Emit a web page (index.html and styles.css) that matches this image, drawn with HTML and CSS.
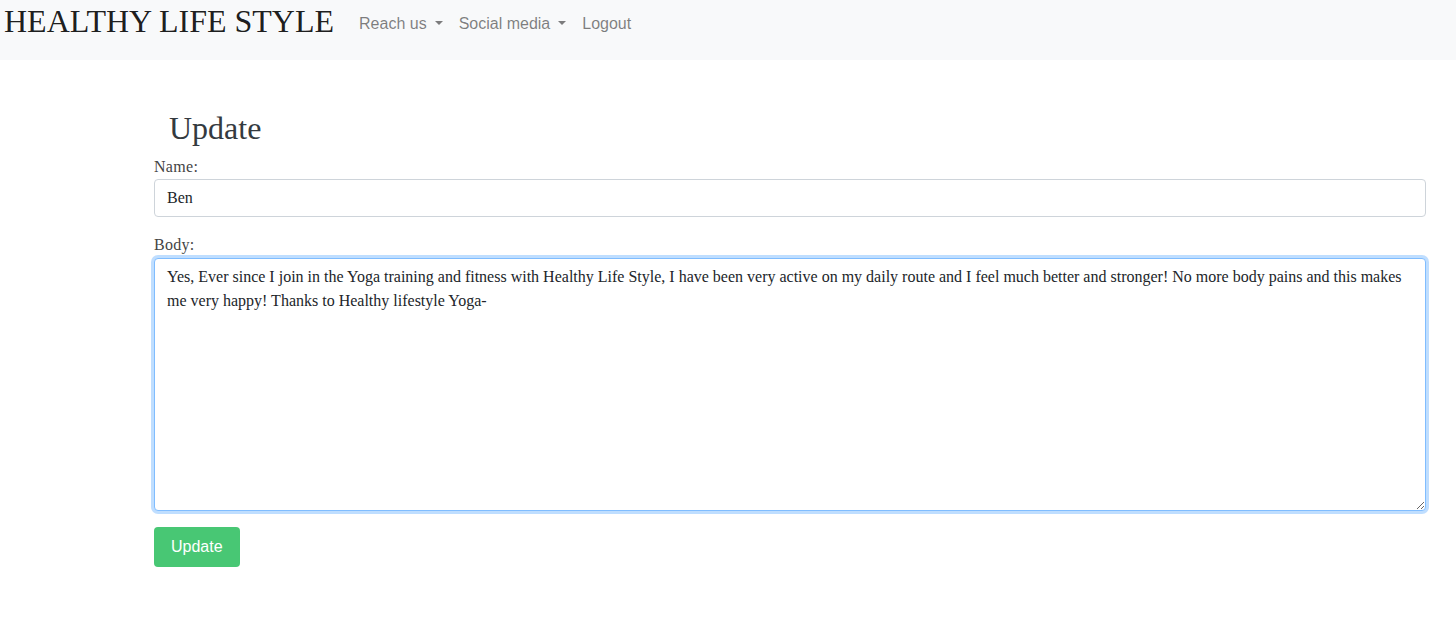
FILE: index.html
```html
<!DOCTYPE html>
<html lang="en">
<head>
<meta charset="utf-8">
<title>Update</title>
<link rel="stylesheet" href="styles.css">
</head>
<body>
<nav class="navbar">
  <a class="brand" href="#">HEALTHY LIFE STYLE</a>
  <ul class="nav">
    <li><a class="nav-link dropdown-toggle" href="#">Reach us</a></li>
    <li><a class="nav-link dropdown-toggle" href="#">Social media</a></li>
    <li><a class="nav-link" href="#">Logout</a></li>
  </ul>
</nav>
<main class="container">
  <h1 class="title">Update</h1>
  <form class="form">
    <div class="form-group">
      <label class="label" for="name">Name:</label>
      <input class="control" id="name" type="text" value="Ben">
    </div>
    <div class="form-group">
      <label class="label" for="body">Body:</label>
      <textarea class="control textarea focused" id="body" spellcheck="false">Yes, Ever since I join in the Yoga training and fitness with Healthy Life Style, I have been very active on my daily route and I feel much better and stronger! No more body pains and this makes me very happy! Thanks to Healthy lifestyle Yoga-</textarea>
    </div>
    <button class="btn" type="button">Update</button>
  </form>
</main>
</body>
</html>
```

FILE: styles.css
```css
* { box-sizing: border-box; }

body {
  margin: 0;
  background: #fff;
  font-family: "Liberation Serif", "Times New Roman", serif;
  font-size: 16px;
  color: #212529;
}

.navbar {
  display: flex;
  align-items: flex-start;
  height: 60px;
  background: #f8f9fa;
  padding: 1px 0 0 4px;
}

.brand {
  font-family: "Liberation Serif", "Times New Roman", serif;
  font-size: 32px;
  line-height: 40px;
  color: rgba(0, 0, 0, 0.9);
  text-decoration: none;
  margin-right: 17px;
}

.nav {
  display: flex;
  list-style: none;
  margin: 3px 0 0 0;
  padding: 0;
}

.nav-link {
  display: block;
  padding: 8px;
  font-family: "Liberation Sans", Arial, sans-serif;
  font-size: 16px;
  line-height: 24px;
  color: rgba(0, 0, 0, 0.5);
  text-decoration: none;
}

.dropdown-toggle::after {
  content: "";
  display: inline-block;
  margin-left: 8px;
  vertical-align: 4px;
  border-top: 4px solid;
  border-right: 4px solid transparent;
  border-left: 4px solid transparent;
}

.container {
  padding: 49px 30px 0 154px;
}

.title {
  margin: 0 0 8px 15px;
  font-size: 32px;
  font-weight: normal;
  line-height: 38px;
  color: #343a40;
}

.form-group {
  margin-bottom: 16px;
}

.label {
  display: block;
  font-size: 16px;
  line-height: 24px;
  letter-spacing: 0.3px;
  color: #444;
}

.control {
  display: block;
  width: 100%;
  height: 38px;
  padding: 6px 12px;
  font-family: "Liberation Serif", "Times New Roman", serif;
  font-size: 16px;
  line-height: 24px;
  color: #212529;
  background: #fff;
  border: 1px solid #ced4da;
  border-radius: 4px;
  outline: none;
}

.textarea {
  margin-top: 1px;
  height: 253px;
  resize: vertical;
}

.textarea.focused {
  border-color: #80bdff;
  box-shadow: 0 0 0 3px rgba(0, 123, 255, 0.25);
}

.btn {
  display: inline-block;
  padding: 8px 17px;
  font-family: "Liberation Sans", Arial, sans-serif;
  font-size: 16px;
  line-height: 24px;
  color: #fff;
  background: #48c774;
  border: 0;
  border-radius: 4px;
}
```
